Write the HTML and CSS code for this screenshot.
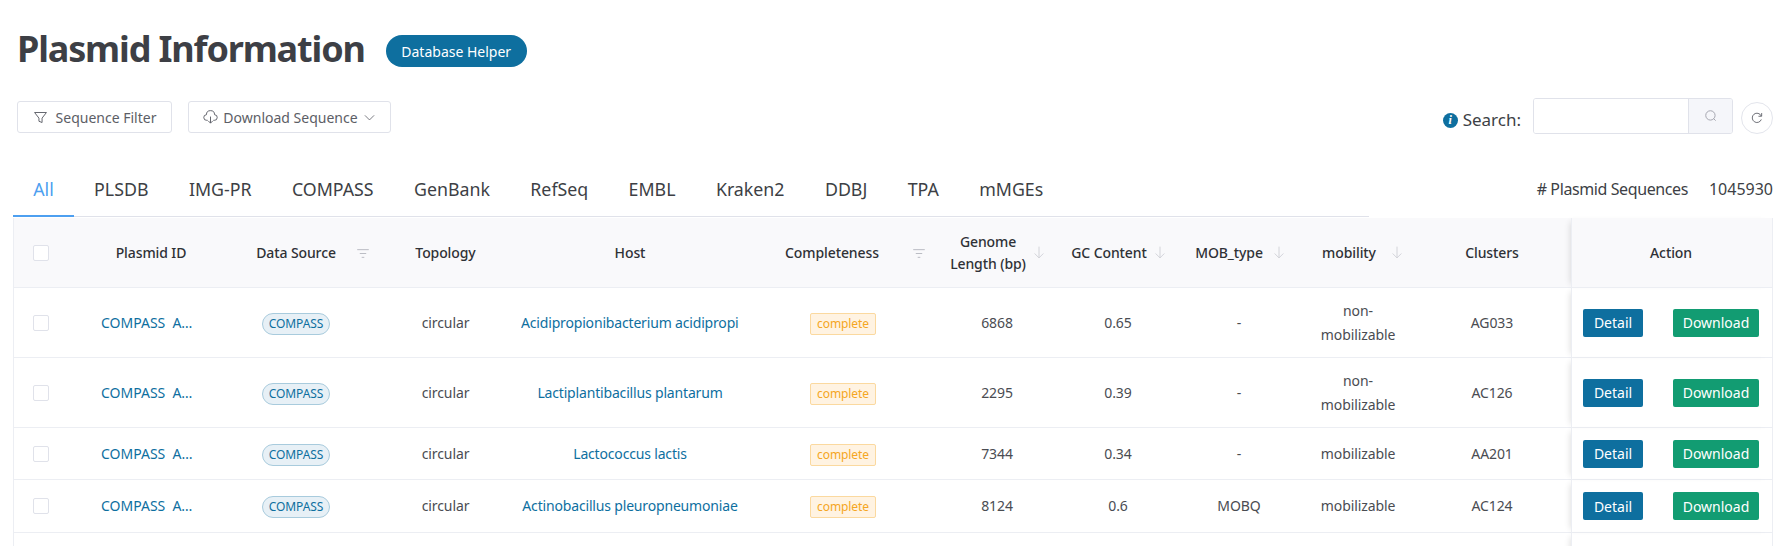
FILE: index.html
```html
<!DOCTYPE html>
<html lang="en">
<head>
<meta charset="utf-8">
<title>Plasmid Information</title>
<link rel="stylesheet" href="styles.css">
</head>
<body>
<main class="page">
  <header class="title-row">
    <h1 class="title">Plasmid Information</h1>
    <button class="helper-btn">Database Helper</button>
  </header>
  <section class="toolbar">
    <div class="tool-left">
      <button class="tool-btn filter-btn">
        <svg class="ico tool-ico" viewBox="0 0 48 48"><path d="M5 8h38L29 26v14l-10-4V26z"/></svg>
        <span>Sequence Filter</span>
      </button>
      <button class="tool-btn download-btn">
        <svg class="ico tool-ico" viewBox="0 0 48 48"><path d="M15 33h-3A9 9 0 0 1 11 15a13 13 0 0 1 26 0 9 9 0 0 1-1 18h-3M24 21v21M17 35l7 7 7-7"/></svg>
        <span>Download Sequence</span>
        <svg class="ico chev" viewBox="0 0 48 48"><path d="M41 16L24 33 7 16"/></svg>
      </button>
    </div>
    <div class="tool-right">
      <span class="info-dot">i</span>
      <label class="search-label">Search:</label>
      <div class="search-box">
        <input class="search-input" type="text" aria-label="Search">
        <span class="search-addon"><svg class="ico" viewBox="0 0 48 48"><path d="M33 33l7 7"/><circle cx="22" cy="22" r="16"/></svg></span>
      </div>
      <button class="refresh-btn"><svg class="ico" viewBox="0 0 48 48"><path d="M38.8 29A16 16 0 1 1 38.4 17M40 7v11H29"/></svg></button>
    </div>
  </section>
  <nav class="tabs-row">
    <div class="tabs">
      <a class="tab active">All</a>
      <a class="tab">PLSDB</a>
      <a class="tab">IMG-PR</a>
      <a class="tab">COMPASS</a>
      <a class="tab">GenBank</a>
      <a class="tab">RefSeq</a>
      <a class="tab">EMBL</a>
      <a class="tab">Kraken2</a>
      <a class="tab">DDBJ</a>
      <a class="tab">TPA</a>
      <a class="tab">mMGEs</a>
    </div>
    <div class="count"><span class="count-label"># Plasmid Sequences</span><span>1045930</span></div>
  </nav>
  <table class="data">
    <colgroup>
      <col class="c-sel"><col class="c-id"><col class="c-src"><col class="c-top"><col class="c-host"><col class="c-comp"><col class="c-len"><col class="c-gc"><col class="c-mob"><col class="c-mobi"><col class="c-clu"><col class="c-act">
    </colgroup>
    <thead>
      <tr>
        <th class="sel"><span class="check"></span></th>
        <th>Plasmid ID</th>
        <th class="has-filter">Data Source<svg class="ico th-filter" viewBox="6 10 36 28"><path d="M6 12h36M14 24h20M20 36h8"/></svg></th>
        <th>Topology</th>
        <th>Host</th>
        <th class="has-filter comp-th"><span class="comp-title">Completeness</span><svg class="ico th-filter" viewBox="6 10 36 28"><path d="M6 12h36M14 24h20M20 36h8"/></svg></th>
        <th><div class="sort"><span>Genome<br>Length (bp)</span><svg class="ico arrow" viewBox="8 4 32 40"><path d="M24 6v36M10 28l14 14 14-14"/></svg></div></th>
        <th><div class="sort"><span>GC Content</span><svg class="ico arrow" viewBox="8 4 32 40"><path d="M24 6v36M10 28l14 14 14-14"/></svg></div></th>
        <th><div class="sort sort-mid"><span>MOB_type</span><svg class="ico arrow" viewBox="8 4 32 40"><path d="M24 6v36M10 28l14 14 14-14"/></svg></div></th>
        <th><div class="sort sort-wide"><span>mobility</span><svg class="ico arrow" viewBox="8 4 32 40"><path d="M24 6v36M10 28l14 14 14-14"/></svg></div></th>
        <th>Clusters</th>
        <th class="action">Action</th>
      </tr>
    </thead>
    <tbody>
      <tr class="tall">
        <td class="sel"><span class="check"></span></td>
        <td><a class="pid">COMPASS  AG033</a></td>
        <td><span class="tag-src">COMPASS</span></td>
        <td>circular</td>
        <td class="host-cell"><a class="host">Acidipropionibacterium acidipropionici</a></td>
        <td><span class="tag-comp">complete</span></td>
        <td>6868</td><td>0.65</td><td>-</td>
        <td class="mobi">non-mobilizable</td>
        <td>AG033</td>
        <td class="action"><div class="acts"><button class="btn-detail">Detail</button><button class="btn-down">Download</button></div></td>
      </tr>
      <tr class="tall">
        <td class="sel"><span class="check"></span></td>
        <td><a class="pid">COMPASS  AC126</a></td>
        <td><span class="tag-src">COMPASS</span></td>
        <td>circular</td>
        <td class="host-cell"><a class="host">Lactiplantibacillus plantarum</a></td>
        <td><span class="tag-comp">complete</span></td>
        <td>2295</td><td>0.39</td><td>-</td>
        <td class="mobi">non-mobilizable</td>
        <td>AC126</td>
        <td class="action"><div class="acts"><button class="btn-detail">Detail</button><button class="btn-down">Download</button></div></td>
      </tr>
      <tr class="short3">
        <td class="sel"><span class="check"></span></td>
        <td><a class="pid">COMPASS  AA201</a></td>
        <td><span class="tag-src">COMPASS</span></td>
        <td>circular</td>
        <td class="host-cell"><a class="host">Lactococcus lactis</a></td>
        <td><span class="tag-comp">complete</span></td>
        <td>7344</td><td>0.34</td><td>-</td>
        <td class="mobi">mobilizable</td>
        <td>AA201</td>
        <td class="action"><div class="acts"><button class="btn-detail">Detail</button><button class="btn-down">Download</button></div></td>
      </tr>
      <tr class="short4">
        <td class="sel"><span class="check"></span></td>
        <td><a class="pid">COMPASS  AC124</a></td>
        <td><span class="tag-src">COMPASS</span></td>
        <td>circular</td>
        <td class="host-cell"><a class="host">Actinobacillus pleuropneumoniae</a></td>
        <td><span class="tag-comp">complete</span></td>
        <td>8124</td><td>0.6</td><td>MOBQ</td>
        <td class="mobi">mobilizable</td>
        <td>AC124</td>
        <td class="action"><div class="acts"><button class="btn-detail">Detail</button><button class="btn-down">Download</button></div></td>
      </tr>
      <tr class="short4">
        <td></td><td></td><td></td><td></td><td></td><td></td><td></td><td></td><td></td><td></td><td></td><td class="action"></td>
      </tr>
    </tbody>
  </table>
</main>
</body>
</html>
```
FILE: styles.css
```css
* { box-sizing: border-box; }
html, body { margin: 0; height: 100%; overflow: hidden; background: #fff; }
body { font-family: "Noto Sans", sans-serif; font-size: 14px; color: #4e5969; }
.page { padding: 0 12px; width: 1785px; height: 546px; overflow: hidden; }
button { font-family: inherit; cursor: pointer; }
.ico { fill: none; stroke: currentColor; stroke-width: 3; width: 14px; height: 14px; flex: none; }

.title-row { display: flex; align-items: flex-start; padding: 29px 0 0 5px; height: 101px; }
.title { margin: 0; font-size: 36px; line-height: 40px; font-weight: 700; color: #3d3f45; letter-spacing: -1.15px; white-space: nowrap; }
.helper-btn { margin: 6px 0 0 21px; height: 32px; width: 141px; border: 0; border-radius: 16px; background: #0e6f9f; color: #fff; font-size: 14px; padding: 0; }

.toolbar { display: flex; justify-content: space-between; height: 47px; align-items: flex-start; padding-left: 5px; }
.tool-left { display: flex; gap: 16px; }
.tool-btn { display: flex; align-items: center; justify-content: center; height: 32px; background: #fff; border: 1px solid #e0e2ea; border-radius: 3px; color: #5c5e66; font-size: 14px; padding: 0; }
.filter-btn { width: 155px; gap: 8px; }
.download-btn { width: 203px; gap: 5px; }
.tool-ico { width: 15px; height: 15px; }
.chev { width: 13px; height: 13px; }

.tool-right { display: flex; align-items: flex-start; }
.info-dot { width: 15px; height: 15px; border-radius: 50%; background: #0e6f9f; color: #fff; font: italic 700 12px/15px "Liberation Serif", serif; text-align: center; margin: 12px 5px 0 0; }
.search-label { font-size: 17px; line-height: 24px; color: #3d3f45; margin: 7px 12px 0 0; }
.search-box { display: flex; width: 200px; height: 36px; margin-top: -3px; border: 1px solid #e0e2ea; border-radius: 3px; overflow: hidden; }
.search-input { flex: 1; min-width: 0; border: 0; outline: 0; padding: 0; }
.search-addon { width: 44px; display: flex; align-items: center; justify-content: center; background: #f5f6fa; border-left: 1px solid #e0e2ea; color: #9a9ca6; }
.refresh-btn { width: 32px; height: 32px; margin: 1px 0 0 8px; border-radius: 50%; border: 1px solid #e3e5ec; background: #fff; color: #5c5e66; padding: 0; display: flex; align-items: center; justify-content: center; }

.tabs-row { display: flex; align-items: flex-end; height: 69px; }
.tabs { display: flex; flex: none; width: 1356px; height: 69px; border-bottom: 1px solid #e0e2ea; margin-left: 1px; }
.tab { height: 69px; padding: 0 20.2px; line-height: 82px; font-size: 17.8px; color: #3d3f45; }
.tab.active { color: #4d9ff0; border-bottom: 2px solid #4d9ff0; }
.count { display: flex; gap: 21px; margin-left: auto; white-space: nowrap; font-size: 16px; color: #3d3f45; line-height: 20px; padding-bottom: 18px; }
.count-label { letter-spacing: -.4px; }

.data { border-collapse: separate; border-spacing: 0; table-layout: fixed; width: 1760px; margin: 1px 0 0 1px; }
.c-sel { width: 81px; } .c-id { width: 114px; } .c-src { width: 176px; } .c-top { width: 123px; }
.c-host { width: 246px; } .c-comp { width: 180px; } .c-len { width: 128px; } .c-gc { width: 114px; }
.c-mob { width: 128px; } .c-mobi { width: 110px; } .c-clu { width: 158px; } .c-act { width: 202px; }

th, td { border-bottom: 1px solid #eceef3; text-align: center; vertical-align: middle; padding: 0 7px; font-size: 14px; line-height: 24px; letter-spacing: -.1px; }
th { height: 70px; background: #f9f9fb; font-weight: 500; line-height: 22px; color: #2f3136; position: relative; }
td { color: #4a4c52; }
th:first-child, td:first-child { border-left: 1px solid #eceef3; }
th:last-child, td:last-child { border-right: 1px solid #eceef3; }
tr.tall td { height: 70px; }
tr.short3 td { height: 52px; }
tr.short4 td { height: 53px; }

th.sel, td.sel { text-align: left; padding: 0 0 0 19px; }
.check { display: block; width: 16px; height: 16px; background: #fff; border: 1px solid #e0e2ea; border-radius: 2px; }

.pid { display: block; white-space: pre; overflow: hidden; text-overflow: ellipsis; max-width: 95px; letter-spacing: 0; color: #0e6f9f; }
.host-cell { padding: 0 14px; letter-spacing: -.17px; }
.host { display: block; white-space: nowrap; overflow: hidden; color: #0e6f9f; }
.tag-src { display: inline-block; height: 22px; line-height: 20px; padding: 0 6px; border: 1px solid #a8cbdd; border-radius: 11px; background: #e7f0f6; color: #0e6f9f; font-size: 12px; }
.tag-comp { display: inline-block; height: 22px; line-height: 20px; padding: 0 6px; border: 1px solid #fbd99f; border-radius: 2px; background: #fff3e2; color: #f5a623; font-size: 12px; }

.sort { display: flex; align-items: center; justify-content: center; gap: 8px; }
.arrow { width: 10px; height: 12.5px; color: #c9cbd1; stroke-width: 2.5; }
.sort-mid .arrow { margin-left: 3px; margin-right: -1px; }
.sort-wide .arrow { margin-left: 8px; margin-right: -8px; }
.th-filter { position: absolute; top: 31px; width: 12px; height: 9px; color: #b8bac2; }
.has-filter .th-filter { right: 15px; }
.comp-title { padding-right: 22px; }
.comp-th .th-filter { right: 8px; }

.mobi { padding: 0 8px; }
th.action, td.action { border-left: 1px solid #eceef3; padding: 0 13px 0 11px; box-shadow: -5px 0 6px -4px rgba(0,0,0,.12); }
.acts { display: flex; justify-content: space-between; align-items: center; }
.btn-detail, .btn-down { height: 28px; border: 0; border-radius: 2px; color: #fff; font-size: 14px; padding: 0; }
.btn-detail { width: 60px; background: #0e6f9f; }
.btn-down { width: 86px; background: #129c72; }
```
